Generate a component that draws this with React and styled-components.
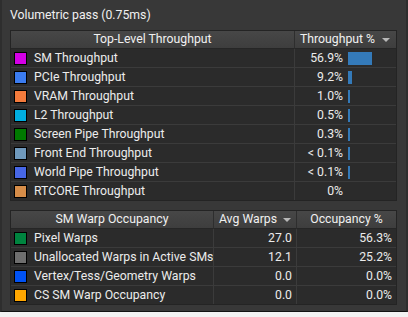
import React from "react";
import styled, { createGlobalStyle } from "styled-components";

const Global = createGlobalStyle`
    html, body {
        margin: 0;
        background: #f2f2f2;
    }
    body {
        font-family: Roboto, "Liberation Sans", sans-serif;
        font-size: 12.25px;
        color: #ececec;
    }
`;

const Panel = styled.div`
    width: 408px;
    height: 312px;
    box-sizing: border-box;
    background: #383838;
    border-left: 2px solid #2e2e2e;
    border-right: 2px solid #2e2e2e;
    border-bottom: 1px solid #111;
    padding: 6px 9px 0 8px;
    display: flex;
    flex-direction: column;
`;

const Title = styled.div`
    line-height: 18px;
    height: 18px;
    margin-bottom: 6px;
    color: #f0f0f0;
`;

const Table = styled.div`
    display: grid;
    grid-template-columns: ${p => p.cols};
    border: 1px solid #242424;
    background: #2b2b2b;
    margin-bottom: ${p => p.gap || 0}px;
`;

const Head = styled.div`
    height: 17px;
    line-height: 17px;
    background: linear-gradient(#474747, #3e3e3e);
    border-bottom: 1px solid #262626;
    border-right: ${p => (p.last ? "none" : "1px solid #2e2e2e")};
    text-align: center;
    padding-right: ${p => p.arrow || 0}px;
    position: relative;
    color: #f0f0f0;
`;

const SortArrow = styled.span`
    position: absolute;
    right: ${p => p.right}px;
    top: 7px;
    width: 0;
    height: 0;
    border-left: 4px solid transparent;
    border-right: 4px solid transparent;
    border-top: 4px solid #b8b8b8;
`;

const Cell = styled.div`
    height: 18px;
    line-height: 18px;
    border-bottom: ${p => (p.bottom ? "none" : "1px solid #3b3b3b")};
    border-right: ${p => (p.last ? "none" : "1px solid #3b3b3b")};
    display: flex;
    align-items: center;
    justify-content: ${p => (p.num ? "flex-end" : "flex-start")};
    padding: ${p => (p.num ? "0 4px 0 0" : "0 0 0 3px")};
    white-space: nowrap;
    overflow: hidden;
`;

const Swatch = styled.span`
    width: 11px;
    height: 11px;
    border: 1px solid #000;
    background: ${p => p.color};
    margin-right: 7px;
    flex: none;
`;

const BarSlot = styled.span`
    width: 44px;
    margin-left: 5px;
    height: 13px;
    display: flex;
    flex: none;
`;

const Bar = styled.span`
    height: 13px;
    background: #347ab9;
`;

const throughput = [
    { name: "SM Throughput", color: "#d400e6", value: "56.9%", bar: 24 },
    { name: "PCIe Throughput", color: "#3b7cf0", value: "9.2%", bar: 4 },
    { name: "VRAM Throughput", color: "#f47b3c", value: "1.0%", bar: 2 },
    { name: "L2 Throughput", color: "#00aee0", value: "0.5%", bar: 2 },
    { name: "Screen Pipe Throughput", color: "#007a00", value: "0.3%", bar: 2 },
    { name: "Front End Throughput", color: "#6e98bb", value: "< 0.1%", bar: 2 },
    { name: "World Pipe Throughput", color: "#4767e6", value: "< 0.1%", bar: 2 },
    { name: "RTCORE Throughput", color: "#d68d49", value: "0%", bar: 0 },
];

const warps = [
    { name: "Pixel Warps", color: "#00843f", avg: "27.0", occ: "56.3%" },
    { name: "Unallocated Warps in Active SMs", color: "#6e6e6e", avg: "12.1", occ: "25.2%" },
    { name: "Vertex/Tess/Geometry Warps", color: "#0052f5", avg: "0.0", occ: "0.0%" },
    { name: "CS SM Warp Occupancy", color: "#ffa600", avg: "0.0", occ: "0.0%" },
];

export default function App() {
    return (
        <>
            <Global />
            <Panel>
                <Title>Volumetric pass (0.75ms)</Title>

                <Table cols="284px 101px" gap={9}>
                    <Head>Top-Level Throughput</Head>
                    <Head last arrow={16}>
                        Throughput %<SortArrow right={6} />
                    </Head>
                    {throughput.map((row, i) => {
                        const bottom = i === throughput.length - 1;
                        return (
                            <React.Fragment key={row.name}>
                                <Cell bottom={bottom}>
                                    <Swatch color={row.color} />
                                    {row.name}
                                </Cell>
                                <Cell num last bottom={bottom}>
                                    {row.value}
                                    <BarSlot>
                                        {row.bar > 0 && <Bar style={{ width: row.bar }} />}
                                    </BarSlot>
                                </Cell>
                            </React.Fragment>
                        );
                    })}
                </Table>

                <Table cols="203px 83px 99px">
                    <Head>SM Warp Occupancy</Head>
                    <Head arrow={14}>
                        Avg Warps<SortArrow right={5} />
                    </Head>
                    <Head last>Occupancy %</Head>
                    {warps.map((row, i) => {
                        const bottom = i === warps.length - 1;
                        return (
                            <React.Fragment key={row.name}>
                                <Cell bottom={bottom}>
                                    <Swatch color={row.color} />
                                    {row.name}
                                </Cell>
                                <Cell num bottom={bottom}>{row.avg}</Cell>
                                <Cell num last bottom={bottom}>{row.occ}</Cell>
                            </React.Fragment>
                        );
                    })}
                </Table>
            </Panel>
        </>
    );
}
